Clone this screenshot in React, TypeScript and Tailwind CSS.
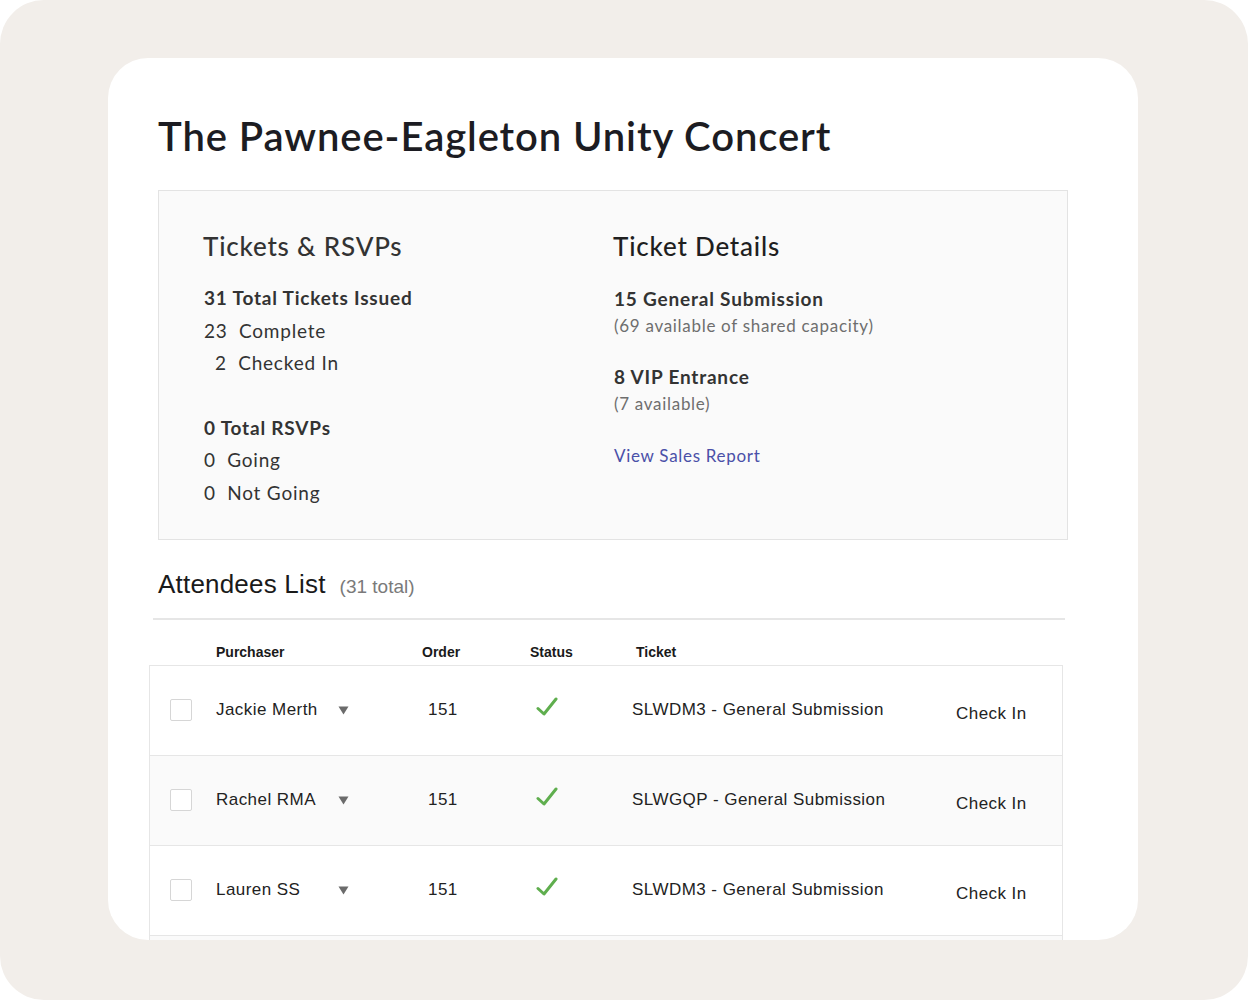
import React from 'react';

type Attendee = {
  name: string;
  order: number;
  ticket: string;
};

const attendees: Attendee[] = [
  { name: 'Jackie Merth', order: 151, ticket: 'SLWDM3 - General Submission' },
  { name: 'Rachel RMA', order: 151, ticket: 'SLWGQP - General Submission' },
  { name: 'Lauren SS', order: 151, ticket: 'SLWDM3 - General Submission' },
];

const CheckMark = () => (
  <svg width="22" height="20" viewBox="0 0 22 20" fill="none">
    <path d="M2 11.5 L8 17 L20 2" stroke="#5fae4e" strokeWidth="3" strokeLinecap="round" strokeLinejoin="round" />
  </svg>
);

const Caret = () => (
  <svg width="11" height="9" viewBox="0 0 11 9">
    <path d="M0.5 0.5 H10.5 L5.5 8.5 Z" fill="#6b6b6b" />
  </svg>
);

const AttendeeRow: React.FC<{ a: Attendee; shaded: boolean }> = ({ a, shaded }) => (
  <div
    className={`flex h-[90px] shrink-0 items-center border-b border-[#e6e6e6] ${shaded ? 'bg-[#fafafa]' : 'bg-white'}`}
  >
    <div className="w-[66px] pl-[20px]">
      <div className="h-[22px] w-[22px] rounded-[2px] border border-[#d6d6d6] bg-white" />
    </div>
    <div className="flex w-[212px] items-center">
      <span className="w-[122px]">{a.name}</span>
      <Caret />
    </div>
    <div className="w-[108px]">{a.order}</div>
    <div className="w-[96px] pb-[6px]">
      <CheckMark />
    </div>
    <div className="w-[324px]">{a.ticket}</div>
    <div className="pt-[8px]">Check In</div>
  </div>
);

const App: React.FC = () => {
  return (
    <div className="h-[1000px] w-[1248px] bg-white">
      <div className="h-full w-full rounded-[44px] bg-[#f2eeea] pl-[108px] pt-[58px]">
        <div className="h-[882px] w-[1030px] overflow-hidden rounded-[40px] bg-white pl-[50px] pr-[70px]">
          <h1 className="mt-[54px] font-['Lato',sans-serif] text-[40px] font-semibold leading-[48px] tracking-[0.9px] text-[#1c1c22]">
            The Pawnee-Eagleton Unity Concert
          </h1>

          {/* summary panel */}
          <div className="mt-[30px] flex h-[350px] border border-[#e3e3e3] bg-[#fafafa] pl-[44px] pt-[38px] font-['Lato',sans-serif] tracking-[0.8px] text-[#333]">
            <div className="w-[411px]">
              <h2 className="text-[26px] font-medium leading-[34px] text-[#333]">Tickets &amp; RSVPs</h2>
              <div className="mt-[19px] text-[19px] leading-[32.5px]">
                <div className="pl-[1px] font-bold">31 Total Tickets Issued</div>
                <div className="pl-[1px]">23&nbsp; Complete</div>
                <div className="pl-[12px]">2&nbsp; Checked In</div>
                <div className="mt-[32px] pl-[1px] font-bold">0 Total RSVPs</div>
                <div className="pl-[1px]">0&nbsp; Going</div>
                <div className="pl-[1px]">0&nbsp; Not Going</div>
              </div>
            </div>
            <div>
              <h2 className="-ml-[1px] text-[26px] font-medium leading-[34px] text-[#1f1f1f]">Ticket Details</h2>
              <div className="mt-[22px]">
                <div className="text-[19px] font-bold leading-[27px]">15 General Submission</div>
                <div className="text-[17px] leading-[27px] tracking-[0.7px] text-[#6e6e6e]">(69 available of shared capacity)</div>
                <div className="mt-[24px] text-[19px] font-bold leading-[27px]">8 VIP Entrance</div>
                <div className="text-[17px] leading-[27px] tracking-[0.7px] text-[#6e6e6e]">(7 available)</div>
                <a href="#" className="mt-[25px] block text-[17px] leading-[27px] tracking-[0.7px] text-[#4a50a8]">
                  View Sales Report
                </a>
              </div>
            </div>
          </div>

          {/* attendees */}
          <div className="mt-[27px] flex items-baseline gap-[14px] font-['Liberation_Sans',Arial,sans-serif]">
            <h2 className="text-[26px] leading-[34px] tracking-[0.2px] text-[#1a1a1a]">Attendees List</h2>
            <span className="text-[19px] text-[#7a7a7a]">(31 total)</span>
          </div>
          <div className="-ml-[5px] mt-[16px] h-[2px] w-[912px] bg-[#e6e6e6]" />

          <div className="font-['Liberation_Sans',Arial,sans-serif] text-[#222]">
            <div className="flex h-[45px] items-end pb-[2px] pl-[58px] text-[14px] font-bold text-[#1a1a1a]">
              <span className="w-[206px]">Purchaser</span>
              <span className="w-[108px]">Order</span>
              <span className="w-[106px]">Status</span>
              <span>Ticket</span>
            </div>
            <div className="-ml-[9px] flex w-[914px] flex-col border-x border-t border-[#e6e6e6] text-[17px] tracking-[0.45px]">
              {attendees.map((a, i) => (
                <AttendeeRow key={i} a={a} shaded={i % 2 === 1} />
              ))}
              <div className="h-[90px] shrink-0 bg-[#fafafa]" />
            </div>
          </div>
        </div>
      </div>
    </div>
  );
};

export default App;
